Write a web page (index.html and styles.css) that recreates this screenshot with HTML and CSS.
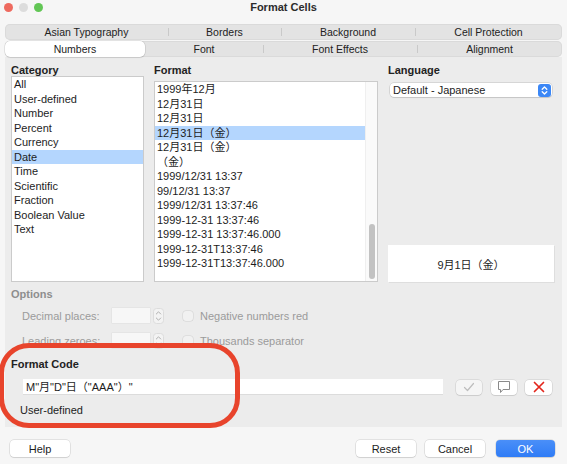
FILE: index.html
```html
<!DOCTYPE html>
<html lang="en">
<head>
    <meta charset="UTF-8">
    <title>Format Cells</title>
    <link rel="stylesheet" href="styles.css">
</head>
<body>
    <div class="window">
        <div class="titlebar">
            <div class="lights">
                <span class="light red"></span>
                <span class="light gray"></span>
                <span class="light green"></span>
            </div>
            <div class="title">Format Cells</div>
            <div></div>
        </div>

        <div class="tabs">
            <div class="tab-row row-top">
                <div class="tab">Asian Typography</div>
                <div class="tab sep">Borders</div>
                <div class="tab sep">Background</div>
                <div class="tab sep">Cell Protection</div>
            </div>
            <div class="tab-row row-bottom">
                <div class="tab active">Numbers</div>
                <div class="tab">Font</div>
                <div class="tab sep">Font Effects</div>
                <div class="tab sep">Alignment</div>
            </div>
        </div>

        <div class="panel">
            <div class="main">
                <div class="col">
                    <div class="label">Category</div>
                    <div class="list category-list">
                        <div class="item">All</div>
                        <div class="item">User-defined</div>
                        <div class="item">Number</div>
                        <div class="item">Percent</div>
                        <div class="item">Currency</div>
                        <div class="item selected">Date</div>
                        <div class="item">Time</div>
                        <div class="item">Scientific</div>
                        <div class="item">Fraction</div>
                        <div class="item">Boolean Value</div>
                        <div class="item">Text</div>
                    </div>
                </div>
                <div class="col">
                    <div class="label">Format</div>
                    <div class="list format-list">
                        <div class="items">
                            <div class="item">1999年12月</div>
                            <div class="item">12月31日</div>
                            <div class="item">12月31日</div>
                            <div class="item selected">12月31日（金）</div>
                            <div class="item">12月31日（金）</div>
                            <div class="item">（金）</div>
                            <div class="item">1999/12/31 13:37</div>
                            <div class="item">99/12/31 13:37</div>
                            <div class="item">1999/12/31 13:37:46</div>
                            <div class="item">1999-12-31 13:37:46</div>
                            <div class="item">1999-12-31 13:37:46.000</div>
                            <div class="item">1999-12-31T13:37:46</div>
                            <div class="item">1999-12-31T13:37:46.000</div>
                        </div>
                        <div class="scrollbar"><div class="thumb"></div></div>
                    </div>
                </div>
                <div class="col">
                    <div class="label">Language</div>
                    <div class="select">
                        <span>Default - Japanese</span>
                        <svg width="13" height="13" viewBox="0 0 13 13"><rect width="13" height="13" rx="3" fill="#3b87f6"/><path d="M4.2 5.3 6.5 3 8.8 5.3M4.2 7.7 6.5 10 8.8 7.7" fill="none" stroke="#fff" stroke-width="1.3" stroke-linecap="round" stroke-linejoin="round"/></svg>
                    </div>
                    <div class="preview">9月1日（金）</div>
                </div>
            </div>

            <div class="options">
                <div class="label disabled">Options</div>
                <div class="opt-row">
                    <span class="opt-label">Decimal places:</span>
                    <span class="field"></span>
                    <span class="spin"><svg width="11" height="16" viewBox="0 0 11 16"><rect x="0.5" y="0.5" width="10" height="15" rx="3" fill="#f3f3f3" stroke="#dcdcdc"/><path d="M3.3 6 5.5 3.8 7.7 6M3.3 10 5.5 12.2 7.7 10" fill="none" stroke="#b0b0b0" stroke-width="1" stroke-linecap="round" stroke-linejoin="round"/></svg></span>
                    <span class="check"></span>
                    <span class="opt-text">Negative numbers red</span>
                </div>
                <div class="opt-row">
                    <span class="opt-label">Leading zeroes:</span>
                    <span class="field"></span>
                    <span class="spin"><svg width="11" height="16" viewBox="0 0 11 16"><rect x="0.5" y="0.5" width="10" height="15" rx="3" fill="#f3f3f3" stroke="#dcdcdc"/><path d="M3.3 6 5.5 3.8 7.7 6M3.3 10 5.5 12.2 7.7 10" fill="none" stroke="#b0b0b0" stroke-width="1" stroke-linecap="round" stroke-linejoin="round"/></svg></span>
                    <span class="check"></span>
                    <span class="opt-text">Thousands separator</span>
                </div>
            </div>

            <div class="code">
                <div class="label">Format Code</div>
                <div class="code-row">
                    <div class="code-input">M"月"D"日（"AAA"）"</div>
                    <span class="icon-btn btn-check"><svg width="14" height="12" viewBox="0 0 14 12"><path d="M2.5 6.5 5.5 9.5 11.5 2.5" fill="none" stroke="#bdbdbd" stroke-width="1.2" stroke-linecap="round" stroke-linejoin="round"/></svg></span>
                    <span class="icon-btn btn-comment"><svg width="16" height="14" viewBox="0 0 16 14"><path d="M2.5 1.5H13.5V9.5H7L4.5 12.5V9.5H2.5Z" fill="none" stroke="#8a8a8a" stroke-width="1" stroke-linejoin="round"/></svg></span>
                    <span class="icon-btn btn-delete"><svg width="14" height="14" viewBox="0 0 14 14"><path d="M2.5 2.5 11.5 11.5M11.5 2.5 2.5 11.5" fill="none" stroke="#e3261c" stroke-width="1.7" stroke-linecap="round"/></svg></span>
                </div>
                <div class="code-desc">User-defined</div>
            </div>
        </div>

        <div class="footer">
            <button class="btn">Help</button>
            <div class="footer-right">
                <button class="btn">Reset</button>
                <button class="btn">Cancel</button>
                <button class="btn btn-ok">OK</button>
            </div>
        </div>

        <div class="highlight-ring"></div>
    </div>
</body>
</html>
```

FILE: styles.css
```css
body {
    margin: 0;
    width: 567px;
    height: 464px;
    overflow: hidden;
    background-color: #f6f6f6;
    font-family: "Liberation Sans", "Noto Sans CJK JP", Arial, sans-serif;
    font-size: 11px;
    color: #1d1d1d;
}
.window {
    position: relative;
    height: 464px;
}
.titlebar {
    height: 14px;
    display: grid;
    grid-template-columns: 1fr auto 1fr;
    align-items: center;
}
.lights {
    display: flex;
    gap: 6px;
    padding-left: 3.5px;
}
.light {
    width: 9px;
    height: 9px;
    border-radius: 50%;
}
.light.red { background-color: #ee6a5f; }
.light.gray { background-color: #dcdcdc; }
.light.green { background-color: #62c655; }
.title {
    font-weight: bold;
    font-size: 11px;
    color: #2b2b2b;
}
.tabs {
    margin: 10px 5px 0;
    display: flex;
    flex-direction: column;
    gap: 1px;
}
.tab-row {
    display: grid;
    height: 16px;
    background-color: #e3e3e3;
    border-radius: 5px;
    box-shadow: inset 0 0 0 1px #dadada;
}
.row-top {
    grid-template-columns: 163px 113px 134px 147px;
}
.row-bottom {
    grid-template-columns: 140px 118px 154px 145px;
}
.tab {
    position: relative;
    display: flex;
    align-items: center;
    justify-content: center;
    font-size: 10.5px;
    color: #222;
}
.tab.sep::before {
    content: "";
    position: absolute;
    left: 0;
    top: 4px;
    height: 8px;
    border-left: 1px solid #c9c9c9;
}
.tab.active {
    background-color: #fff;
    border-radius: 5px;
    box-shadow: 0 0 0 0.5px rgba(0, 0, 0, 0.15), 0 1px 1px rgba(0, 0, 0, 0.08);
}
.panel {
    margin: 0 5px;
    height: 370px;
    background-color: #ececec;
    box-sizing: border-box;
    padding: 7px 8px 0 6px;
}
.main {
    display: grid;
    grid-template-columns: 133px 224px 166px;
    column-gap: 10px;
    height: 218px;
}
.col {
    display: flex;
    flex-direction: column;
}
.label {
    font-weight: bold;
    line-height: 12px;
    color: #222;
}
.label.disabled {
    color: #8e8e8e;
}
.list {
    flex: 1;
    background-color: #fff;
    border: 1px solid #cbcbcb;
    line-height: 14.5px;
}
.category-list .item {
    padding-left: 2px;
}
.format-list {
    margin-top: 5px;
    display: flex;
}
.format-list .items {
    flex: 1;
}
.format-list .item {
    padding-left: 2px;
}
.item.selected {
    background-color: #b4d6fe;
}
.scrollbar {
    width: 11px;
    display: flex;
    flex-direction: column;
    justify-content: flex-end;
    align-items: center;
    padding-bottom: 2px;
    background-color: #fafafa;
    border-left: 1px solid #efefef;
}
.thumb {
    width: 6px;
    height: 55px;
    border-radius: 3px;
    background-color: #c2c2c2;
}
.select {
    margin-top: 7px;
    margin-left: 2px;
    margin-right: 2px;
    height: 14px;
    background-color: #fff;
    border-radius: 4px;
    box-shadow: 0 0 0 0.5px rgba(0, 0, 0, 0.18), 0 1px 1px rgba(0, 0, 0, 0.08);
    display: flex;
    align-items: center;
    justify-content: space-between;
    padding: 0 1px 0 3px;
}
.select svg {
    display: block;
}
.preview {
    margin-top: auto;
    height: 37px;
    background-color: #fff;
    display: flex;
    align-items: center;
    justify-content: center;
    box-shadow: 1px 1px 0 #dedede;
}
.options {
    margin-top: 6px;
}
.opt-row {
    display: flex;
    align-items: center;
    height: 15px;
    margin-top: 10px;
    padding-left: 11px;
    color: #9b9b9b;
}
.options .label + .opt-row {
    margin-top: 8px;
}
.opt-label {
    width: 90px;
}
.field {
    width: 38px;
    height: 15px;
    background-color: #f7f7f7;
    box-shadow: 0 0 0 0.5px rgba(0, 0, 0, 0.06);
}
.spin {
    margin-left: 3px;
    display: flex;
}
.check {
    width: 10px;
    height: 10px;
    margin-left: 19px;
    border-radius: 3px;
    background-color: #f1f1f1;
    box-shadow: 0 0 0 0.5px rgba(0, 0, 0, 0.12);
}
.opt-text {
    margin-left: 7px;
}
.code {
    margin-top: 10px;
}
.code-row {
    display: flex;
    align-items: center;
    margin-top: 9px;
    padding-left: 12px;
}
.code-input {
    width: 420px;
    height: 16px;
    box-sizing: border-box;
    padding-left: 3px;
    line-height: 16px;
    background-color: #fff;
    border-bottom: 1px solid #dcdcdc;
}
.icon-btn {
    width: 26px;
    height: 15px;
    display: flex;
    align-items: center;
    justify-content: center;
    border-radius: 4px;
    background-color: #fff;
    box-shadow: 0 0 0 0.5px rgba(0, 0, 0, 0.14), 0 1px 1px rgba(0, 0, 0, 0.07);
}
.btn-check {
    margin-left: 13px;
    background-color: #f5f5f5;
}
.btn-comment {
    margin-left: 9px;
}
.btn-delete {
    margin-left: 8px;
    width: 27px;
}
.code-desc {
    margin-top: 9px;
    padding-left: 9px;
    line-height: 12px;
}
.footer {
    display: flex;
    justify-content: space-between;
    align-items: center;
    padding: 13px 12px 0 10px;
}
.footer-right {
    display: flex;
    gap: 9px;
}
.btn {
    width: 60px;
    height: 17px;
    padding: 0;
    border: none;
    border-radius: 4px;
    background-color: #fff;
    font-family: "Liberation Sans", Arial, sans-serif;
    font-size: 11px;
    color: #1d1d1d;
    box-shadow: 0 0 0 0.5px rgba(0, 0, 0, 0.16), 0 1px 1px rgba(0, 0, 0, 0.08);
}
.btn-ok {
    width: 59px;
    margin-left: 2px;
    color: #fff;
    background: linear-gradient(#4a8ff8, #2f7cf6);
}
.highlight-ring {
    position: absolute;
    left: -1px;
    top: 343px;
    width: 241px;
    height: 85px;
    box-sizing: border-box;
    border: 5px solid #e8442c;
    border-radius: 30px;
}
```
